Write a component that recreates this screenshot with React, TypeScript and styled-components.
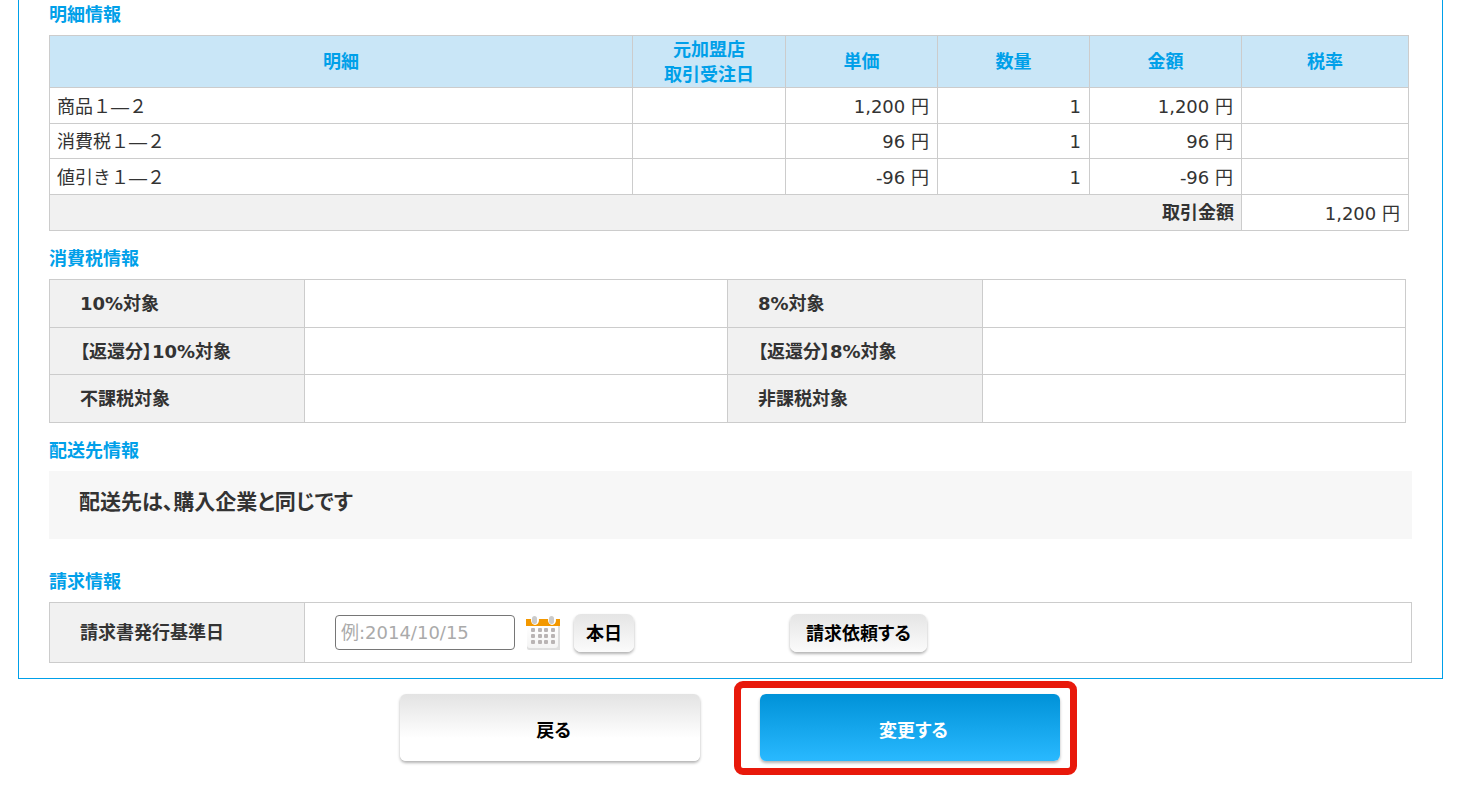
import React from "react";
import styled, { createGlobalStyle, css } from "styled-components";

const GlobalStyle = createGlobalStyle`
  *, *::before, *::after { box-sizing: border-box; }
  body {
    margin: 0;
    background: #fff;
    color: #333;
    font-family: "DejaVu Sans", "Noto Sans CJK JP", sans-serif;
    font-size: 18px;
    line-height: 25px;
  }
  button, input { font-family: inherit; font-size: inherit; }
`;

const Panel = styled.main`
  margin: 0 16px 0 18px;
  padding: 2px 30px 15px;
  border: 1px solid #00a0e9;
  border-top: 0;
`;

const Section = styled.section<{ $gap?: number }>`
  margin-bottom: ${({ $gap = 15 }) => $gap}px;
  &:last-child { margin-bottom: 0; }
`;

const Heading = styled.h2`
  margin: 0 0 7px;
  font-size: 18px;
  line-height: 26px;
  font-weight: bold;
  color: #00a0e9;
`;

const Table = styled.table<{ $inset?: number }>`
  width: calc(100% - ${({ $inset = 0 }) => $inset}px);
  border-collapse: collapse;
  table-layout: fixed;
  th, td { border: 1px solid #ccc; }
`;

const Col = styled.col<{ $width?: number }>`
  ${({ $width }) => $width && css`width: ${$width}px;`}
`;

const Row = styled.tr<{ $height: number }>`
  height: ${({ $height }) => $height}px;
`;

const HeadCell = styled.th`
  padding: 0;
  background: #c9e6f7;
  color: #00a0e9;
`;

const Cell = styled.td<{ $align?: "left" | "right" }>`
  padding: 1px 8px 0 7px;
  text-align: ${({ $align = "left" }) => $align};
`;

const TotalLabel = styled.th`
  padding: 0 7px;
  background: #f1f1f1;
  text-align: right;
`;

const RowLabel = styled.th`
  padding: 0 30px;
  background: #f1f1f1;
  text-align: left;
  font-feature-settings: "palt";
`;

const FieldCell = styled.td`
  padding: 0 30px;
`;

const Notice = styled.p`
  margin: 0;
  padding: 16px 30px 22px;
  background: #f7f7f7;
  font-size: 21px;
  line-height: 30px;
  font-weight: bold;
  font-feature-settings: "palt";
`;

const FieldRow = styled.div`
  display: flex;
  align-items: center;
`;

const DateInput = styled.input`
  width: 180px;
  height: 35px;
  padding: 0 5px;
  border: 1px solid #767676;
  border-radius: 4px;
  background: #fff;
  color: #333;
  &::placeholder { color: #aaa; opacity: 1; }
`;

const CalendarButton = styled.button`
  display: flex;
  margin: 0 14px 0 11px;
  padding: 0;
  border: 0;
  background: none;
`;

const SmallButton = styled.button`
  height: 38px;
  padding: 0 12px 2px;
  border: 0;
  border-radius: 7px;
  background: linear-gradient(#e5e5e5, #fbfbfb);
  box-shadow: 0 2px 3px rgba(0, 0, 0, 0.3);
  color: #000;
  font-weight: bold;
  font-feature-settings: "palt";
`;

const RequestButton = styled(SmallButton)`
  margin-left: 156px;
  padding: 0 16px 2px;
`;

const Actions = styled.div`
  display: flex;
  justify-content: center;
  gap: 60px;
  padding: 15px 0 26px;
`;

const ActionButton = styled.button<{ $primary?: boolean }>`
  width: 300px;
  height: 67px;
  padding: 2px 0 0 8px;
  border: 0;
  border-radius: 6px;
  background: ${({ $primary }) =>
    $primary
      ? "linear-gradient(#0092d8, #29b9ff)"
      : "linear-gradient(#e3e3e3, #fff 66%)"};
  box-shadow: 0 2px 3px rgba(0, 0, 0, 0.3);
  color: ${({ $primary }) => ($primary ? "#fff" : "#000")};
  font-weight: bold;
  font-feature-settings: "palt";
`;

const Marked = styled.div`
  position: relative;
  &::after {
    content: "";
    position: absolute;
    inset: -13px -17px -14px -26px;
    border: 7px solid #e8190b;
    border-radius: 9px;
    pointer-events: none;
  }
`;

const CalendarIcon = () => (
  <svg width="34" height="34" viewBox="0 0 34 34" aria-hidden="true">
    <defs>
      <linearGradient id="page" x1="0" y1="0" x2="0" y2="1">
        <stop offset="0" stopColor="#fff" />
        <stop offset="1" stopColor="#f4f4f4" />
      </linearGradient>
    </defs>
    <path d="M1 9h33v25H3q-2 0-2-2z" fill="#dedede" />
    <path d="M1 9h31v20q0 3-3 3H4q-3 0-3-3z" fill="url(#page)" />
    <path d="M0 3h34v7H0z" fill="#f39800" />
    <g fill="#fff">
      <ellipse cx="9" cy="4" rx="4" ry="5" />
      <ellipse cx="26" cy="4" rx="4" ry="5" />
    </g>
    <g fill="#cbcbcb">
      <rect x="6" y="0" width="5" height="8" rx="2.5" />
      <rect x="23" y="0" width="5" height="8" rx="2.5" />
    </g>
    <g fill="#b9b4b4">
      {[12, 18, 24].map((y) =>
        [5, 12, 18, 25].map((x) => (
          <rect key={`${x}-${y}`} x={x} y={y} width="4" height="4" rx="1" />
        ))
      )}
    </g>
  </svg>
);

const items = [
  { name: "商品１―２", price: "1,200 円", quantity: "1", amount: "1,200 円", height: 36 },
  { name: "消費税１―２", price: "96 円", quantity: "1", amount: "96 円", height: 35 },
  { name: "値引き１―２", price: "-96 円", quantity: "1", amount: "-96 円", height: 36 },
];

const taxRows = [
  { left: "10%対象", right: "8%対象", height: 48 },
  { left: "【返還分】10%対象", right: "【返還分】8%対象", height: 47 },
  { left: "不課税対象", right: "非課税対象", height: 48 },
];

export default function App() {
  return (
    <>
      <GlobalStyle />
      <Panel>
        <Section>
          <Heading>明細情報</Heading>
          <Table $inset={3}>
            <colgroup>
              <Col />
              <Col $width={153} />
              <Col $width={152} />
              <Col $width={152} />
              <Col $width={152} />
              <Col $width={167} />
            </colgroup>
            <thead>
              <Row $height={52}>
                <HeadCell scope="col">明細</HeadCell>
                <HeadCell scope="col">
                  元加盟店
                  <br />
                  取引受注日
                </HeadCell>
                <HeadCell scope="col">単価</HeadCell>
                <HeadCell scope="col">数量</HeadCell>
                <HeadCell scope="col">金額</HeadCell>
                <HeadCell scope="col">税率</HeadCell>
              </Row>
            </thead>
            <tbody>
              {items.map((item) => (
                <Row key={item.name} $height={item.height}>
                  <Cell>{item.name}</Cell>
                  <Cell />
                  <Cell $align="right">{item.price}</Cell>
                  <Cell $align="right">{item.quantity}</Cell>
                  <Cell $align="right">{item.amount}</Cell>
                  <Cell />
                </Row>
              ))}
            </tbody>
            <tfoot>
              <Row $height={36}>
                <TotalLabel scope="row" colSpan={5}>
                  取引金額
                </TotalLabel>
                <Cell $align="right">1,200 円</Cell>
              </Row>
            </tfoot>
          </Table>
        </Section>

        <Section>
          <Heading>消費税情報</Heading>
          <Table $inset={6}>
            <colgroup>
              <Col $width={255} />
              <Col />
              <Col $width={255} />
              <Col />
            </colgroup>
            <tbody>
              {taxRows.map((row) => (
                <Row key={row.left} $height={row.height}>
                  <RowLabel scope="row">{row.left}</RowLabel>
                  <td />
                  <RowLabel scope="row">{row.right}</RowLabel>
                  <td />
                </Row>
              ))}
            </tbody>
          </Table>
        </Section>

        <Section $gap={30}>
          <Heading>配送先情報</Heading>
          <Notice>配送先は、購入企業と同じです</Notice>
        </Section>

        <Section>
          <Heading>請求情報</Heading>
          <Table>
            <colgroup>
              <Col $width={255} />
              <Col />
            </colgroup>
            <tbody>
              <Row $height={60}>
                <RowLabel scope="row">
                  <label htmlFor="billing-date">請求書発行基準日</label>
                </RowLabel>
                <FieldCell>
                  <FieldRow>
                    <DateInput id="billing-date" type="text" placeholder="例:2014/10/15" />
                    <CalendarButton type="button" aria-label="カレンダー">
                      <CalendarIcon />
                    </CalendarButton>
                    <SmallButton type="button">本日</SmallButton>
                    <RequestButton type="button">請求依頼する</RequestButton>
                  </FieldRow>
                </FieldCell>
              </Row>
            </tbody>
          </Table>
        </Section>
      </Panel>

      <Actions>
        <ActionButton type="button">戻る</ActionButton>
        <Marked>
          <ActionButton type="submit" $primary>
            変更する
          </ActionButton>
        </Marked>
      </Actions>
    </>
  );
}
